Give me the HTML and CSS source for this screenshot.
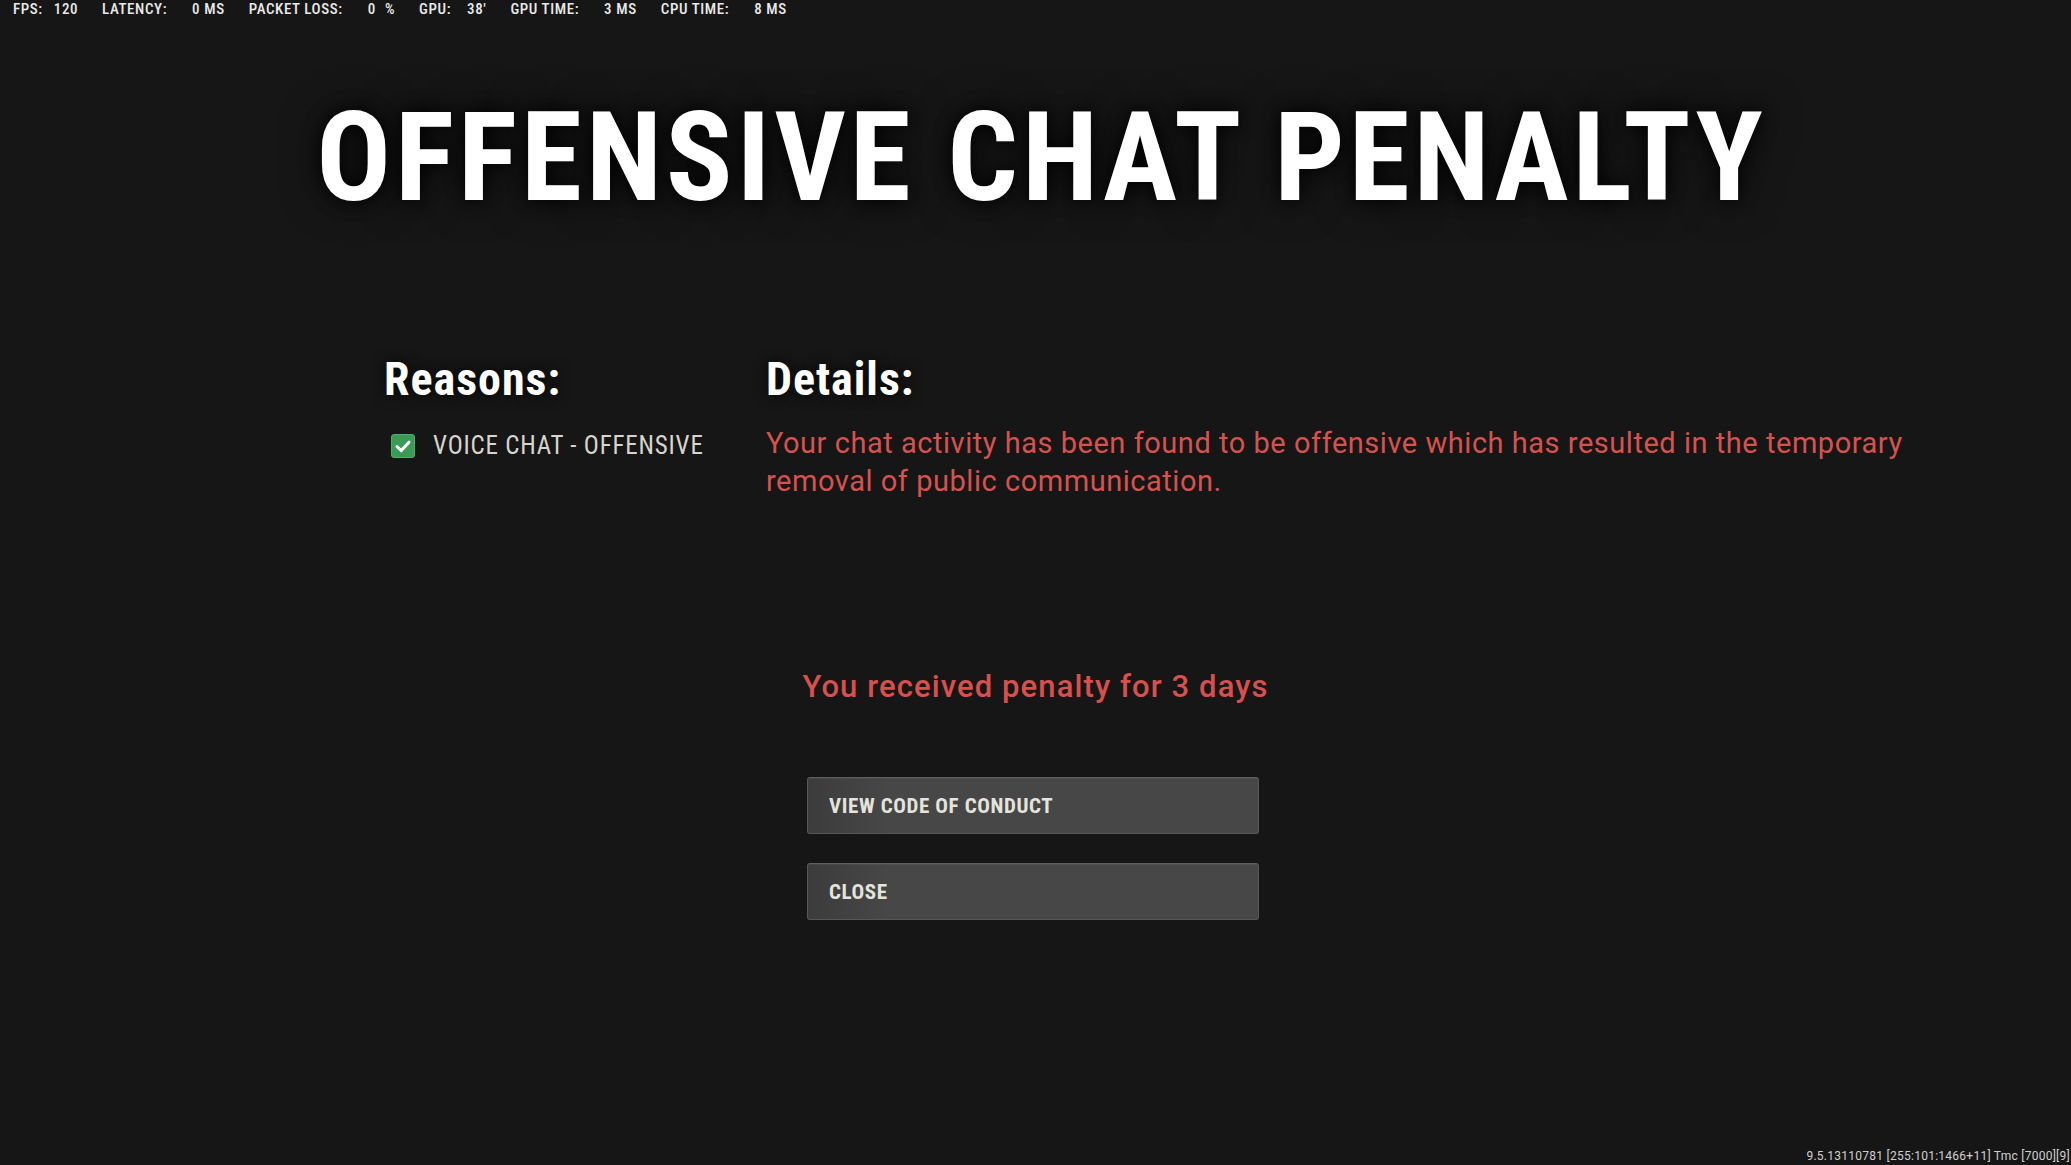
FILE: index.html
```html
<!DOCTYPE html>
<html lang="en">
<head>
<meta charset="utf-8">
<title>Offensive Chat Penalty</title>
<link rel="stylesheet" href="styles.css">
</head>
<body>
<div class="screen">
  <div class="topbar">
    <span class="stat"><span class="label">FPS:</span><span class="value tight">120</span></span>
    <span class="stat"><span class="label">LATENCY:</span><span class="value">0 MS</span></span>
    <span class="stat"><span class="label">PACKET LOSS:</span><span class="value wide">0 %</span></span>
    <span class="stat"><span class="label">GPU:</span><span class="value gpu">38'</span></span>
    <span class="stat"><span class="label">GPU TIME:</span><span class="value">3 MS</span></span>
    <span class="stat"><span class="label">CPU TIME:</span><span class="value">8 MS</span></span>
  </div>

  <h1 class="title">OFFENSIVE CHAT PENALTY</h1>

  <div class="info">
    <div class="reasons">
      <h2 class="heading">Reasons:</h2>
      <div class="reason-item">
        <svg class="check" width="24" height="24" viewBox="0 0 24 24" aria-hidden="true">
          <rect x="0.5" y="0.5" width="23" height="23" rx="2.5" fill="#3b9a56" stroke="#4fae69"/>
          <polyline points="6,12.5 10.3,16.6 18,8.2" fill="none" stroke="#ffffff" stroke-width="3" stroke-linecap="round" stroke-linejoin="round"/>
        </svg>
        <span class="reason-text">VOICE CHAT - OFFENSIVE</span>
      </div>
    </div>
    <div class="details">
      <h2 class="heading">Details:</h2>
      <p class="details-text">Your chat activity has been found to be offensive which has resulted in the temporary<br>removal of public communication.</p>
    </div>
  </div>

  <p class="penalty">You received penalty for 3 days</p>

  <div class="actions">
    <button class="btn" type="button">VIEW CODE OF CONDUCT</button>
    <button class="btn" type="button">CLOSE</button>
  </div>

  <div class="build">9.5.13110781 [255:101:1466+11] Tmc [7000][9]</div>
</div>
</body>
</html>
```
FILE: styles.css
```css
* { box-sizing: border-box; }

html, body {
  margin: 0;
  padding: 0;
  background: #171616;
}

body {
  font-family: "Roboto", "Liberation Sans", sans-serif;
  color: #ffffff;
}

.screen {
  position: relative;
  width: 2071px;
  height: 1165px;
  overflow: hidden;
  display: flex;
  flex-direction: column;
}

/* top performance bar */
.topbar {
  display: flex;
  gap: 24px;
  height: 18px;
  padding-left: 13px;
  font-size: 15px;
  font-stretch: 75%;
  letter-spacing: 0.6px;
  line-height: 18px;
  font-weight: 500;
  color: #e9e9e9;
  white-space: nowrap;
}
.stat { display: flex; }
.value { margin-left: 25px; }
.value.tight { margin-left: 11px; }
.value.wide { word-spacing: 5px; }
.value.gpu { margin-left: 16px; }

/* title */
.title {
  margin: 78px 0 0;
  padding-left: 12px;
  font-size: 124px;
  line-height: 124px;
  font-stretch: 75%;
  font-weight: 700;
  letter-spacing: 4px;
  text-align: center;
  color: #ffffff;
  text-shadow: 0 0 18px rgba(0,0,0,0.95), 0 0 40px rgba(0,0,0,0.6);
}

/* reasons / details */
.info {
  display: flex;
  margin-top: 136px;
  padding-left: 384px;
}
.reasons { width: 382px; flex: none; }
.details { flex: 1; }

.heading {
  margin: 0;
  font-size: 46px;
  line-height: 46px;
  font-stretch: 75%;
  font-weight: 700;
  letter-spacing: 1px;
  color: #ffffff;
  text-shadow: 0 0 14px rgba(0,0,0,0.85);
}

.reason-item {
  display: flex;
  align-items: center;
  height: 28px;
  margin-top: 30px;
  padding-left: 7px;
}
.check { flex: none; display: block; }
.reason-text {
  margin-left: 18px;
  font-size: 25px;
  line-height: 28px;
  font-stretch: 75%;
  font-weight: 400;
  letter-spacing: 0.8px;
  color: #d8d5cd;
}

.details-text {
  margin: 22px 0 0;
  font-size: 29px;
  line-height: 38px;
  font-weight: 400;
  letter-spacing: 0.53px;
  color: #d6524f;
  white-space: nowrap;
}

/* penalty */
.penalty {
  margin: 167px 0 0;
  font-size: 31px;
  line-height: 40px;
  font-weight: 500;
  letter-spacing: 1.1px;
  text-align: center;
  color: #d8504d;
}

/* buttons */
.actions {
  display: flex;
  flex-direction: column;
  align-items: center;
  gap: 29px;
  margin-top: 70px;
  padding-right: 5px;
}
.btn {
  width: 452px;
  height: 57px;
  padding: 0 0 0 21px;
  text-align: left;
  font-family: inherit;
  font-stretch: 75%;
  font-size: 21px;
  font-weight: 700;
  letter-spacing: 0.6px;
  color: #e4e4dc;
  background: linear-gradient(90deg, #3c3c3c 0%, #474747 18%, #474747 100%);
  border: 1px solid #575757;
  border-top-color: #5e5e5e;
  border-radius: 3px;
  box-shadow: inset 0 1px 0 rgba(255,255,255,0.05);
}

.build {
  position: absolute;
  right: 1px;
  bottom: 2px;
  font-size: 12px;
  line-height: 14px;
  letter-spacing: 0.26px;
  color: #d0d0d0;
  white-space: nowrap;
}
```
